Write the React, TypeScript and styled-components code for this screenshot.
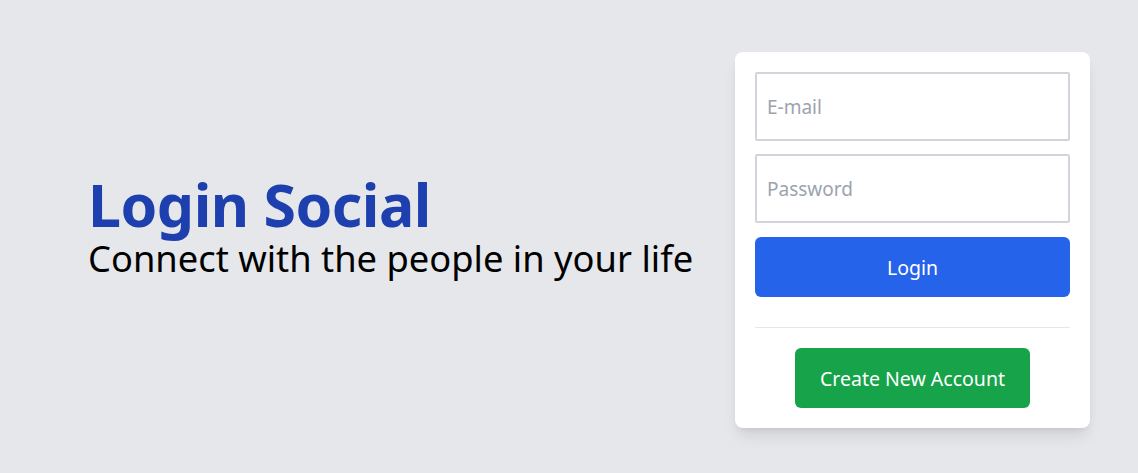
import React from "react";
import styled, { createGlobalStyle } from "styled-components";

const Global = createGlobalStyle`
  html, body { margin: 0; padding: 0; }
  body {
    background: #e5e7eb;
    font-family: "Noto Sans", "Open Sans", sans-serif;
  }
  * { box-sizing: border-box; }
`;

const Page = styled.main`
  height: 473px;
  display: flex;
  align-items: center;
  justify-content: space-between;
  padding: 0 48px 0 88px;
`;

const Intro = styled.section`
  display: flex;
  flex-direction: column;
  margin-bottom: 17px;
`;

const Title = styled.h1`
  margin: 0;
  font-size: 59px;
  line-height: 60px;
  font-weight: 700;
  color: #1e40af;
  letter-spacing: -0.5px;
`;

const Subtitle = styled.p`
  margin: 0;
  font-size: 36.3px;
  line-height: 48px;
  color: #000;
`;

const Card = styled.form`
  width: 355px;
  background: #fff;
  border-radius: 8px;
  padding: 20px;
  display: flex;
  flex-direction: column;
  box-shadow: 0 10px 15px -3px rgba(0,0,0,0.1), 0 4px 6px -4px rgba(0,0,0,0.1);
  margin-top: 7px;
`;

const Input = styled.input`
  width: 100%;
  height: 69px;
  border: 2px solid #d1d5db;
  border-radius: 2px;
  padding: 0 10px;
  font-family: inherit;
  font-size: 19px;
  color: #111827;
  outline: none;
  margin-bottom: 13px;
  &::placeholder { color: #9ca3af; }
`;

const Button = styled.button<{ $variant: "blue" | "green" }>`
  height: 60px;
  border: none;
  border-radius: 6px;
  color: #fff;
  font-family: inherit;
  font-size: 19.5px;
  cursor: pointer;
  background: ${(p) => (p.$variant === "blue" ? "#2563eb" : "#16a34a")};
`;

const LoginButton = styled(Button)`
  width: 100%;
  margin-top: 1px;
`;

const Divider = styled.hr`
  border: none;
  border-top: 1px solid #e5e7eb;
  margin: 30px 0 20px;
  width: 100%;
`;

const CreateButton = styled(Button)`
  align-self: center;
  width: 235px;
`;

export default function App() {
  return (
    <>
      <Global />
      <Page>
        <Intro>
          <Title>Login Social</Title>
          <Subtitle>Connect with the people in your life</Subtitle>
        </Intro>
        <Card onSubmit={(e) => e.preventDefault()}>
          <Input type="email" placeholder="E-mail" />
          <Input type="password" placeholder="Password" />
          <LoginButton $variant="blue" type="submit">Login</LoginButton>
          <Divider />
          <CreateButton $variant="green" type="button">Create New Account</CreateButton>
        </Card>
      </Page>
    </>
  );
}
